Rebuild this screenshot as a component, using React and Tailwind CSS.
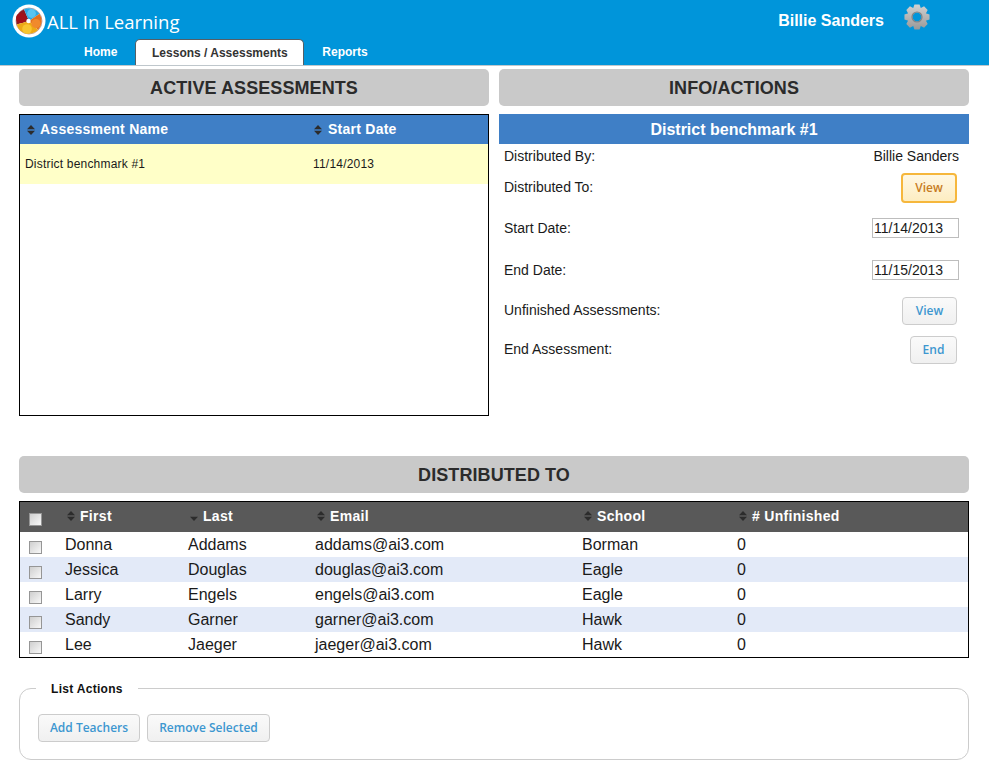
import React from 'react'

const people = [
  { first: 'Donna', last: 'Addams', email: 'addams@ai3.com', school: 'Borman', unfinished: 0 },
  { first: 'Jessica', last: 'Douglas', email: 'douglas@ai3.com', school: 'Eagle', unfinished: 0 },
  { first: 'Larry', last: 'Engels', email: 'engels@ai3.com', school: 'Eagle', unfinished: 0 },
  { first: 'Sandy', last: 'Garner', email: 'garner@ai3.com', school: 'Hawk', unfinished: 0 },
  { first: 'Lee', last: 'Jaeger', email: 'jaeger@ai3.com', school: 'Hawk', unfinished: 0 }
]

const Logo = () => (
  <svg width="34" height="34" viewBox="0 0 34 34" className="shrink-0">
    <circle cx="17" cy="17" r="16.500" fill="#fff" />
    <circle cx="17" cy="17" r="13" fill="#fff" stroke="#8a6a70" strokeWidth="0.6" />
    <path d="M17 17L4.600 20.500A12.800 12.800 0 0 1 12 5.200z" fill="#8e1a22" />
    <path d="M17 17L12 5.200a12.800 12.800 0 0 1 15.500 4.500z" fill="#2aa8e4" />
    <path d="M17 17l10.500-7.300a12.800 12.800 0 0 1-1.500 16.300z" fill="#e2701e" />
    <path d="M17 17l9 9a12.800 12.800 0 0 1-21.400-5.500z" fill="#eda915" />
    <circle cx="9" cy="14" r="5" fill="#a3121a" />
    <circle cx="19.500" cy="9.500" r="4.400" fill="#58c4f2" />
    <circle cx="24" cy="19.500" r="4.600" fill="#f08a2c" />
    <circle cx="15" cy="25" r="4.800" fill="#f8c630" />
    <circle cx="16.500" cy="17" r="2.200" fill="#fff" />
  </svg>
)

// eight toothed gear, outline worked out from the tooth angles
const gearPath = () => {
  const pts = []
  for (let i = 0; i < 8; i++) {
    const a = (i * Math.PI) / 4
    const spread = [[-0.42, 9.500], [-0.2, 12.800], [0.2, 12.800], [0.42, 9.500]]
    spread.forEach(([d, r]) => {
      pts.push(`${(13 + r * Math.sin(a + d)).toFixed(2)} ${(13 - r * Math.cos(a + d)).toFixed(2)}`)
    })
  }
  return `M${pts.join('L')}zM13 8.500a4.500 4.500 0 1 0 0 9a4.500 4.500 0 1 0 0-9z`
}

const Gear = () => (
  <svg width="26" height="26" viewBox="0 0 26 26" className="shrink-0">
    <defs>
      <linearGradient id="gearFill" x1="0" y1="0" x2="0" y2="1">
        <stop offset="0" stopColor="#d2d2d2" />
        <stop offset="0.55" stopColor="#b2b2b2" />
        <stop offset="1" stopColor="#989898" />
      </linearGradient>
    </defs>
    <path fillRule="evenodd" fill="url(#gearFill)" d={gearPath()} />
    <circle cx="13" cy="13" r="5" fill="none" stroke="#7f8588" strokeWidth="1.200" />
  </svg>
)

const SortIcon = ({ up = true, className = '' }) => (
  <svg width="8" height="10" viewBox="0 0 8 10" className={`shrink-0 ${className}`}>
    {up && <path d="M4 0l4 4.200H0z" fill="#2c2c2c" />}
    <path d="M4 10L0 5.800h8z" fill="#2c2c2c" />
  </svg>
)

const SectionTitle = ({ children }) => (
  <h2 className="flex h-[37px] items-center justify-center rounded-[5px] bg-[#c9c9c9] pt-[2px] text-[18px] font-bold tracking-[0.08px] text-[#2b2b2b]">
    {children}
  </h2>
)

const Button = ({ children, active, className = '' }) => (
  <button
    className={`flex items-center justify-center rounded-[4px] border font-['Open_Sans',sans-serif] text-[12px] font-semibold ${
      active
        ? 'border-[#f6b73c] bg-gradient-to-b from-[#fff8e4] to-[#fdedc1] text-[#c77c1f]'
        : 'border-[#cccccc] bg-gradient-to-b from-[#fafafa] to-[#f0f0f0] text-[#3d97d0]'
    } ${className}`}
  >
    {children}
  </button>
)

const Checkbox = () => (
  <input
    type="checkbox"
    className="block h-[13px] w-[13px] appearance-none border border-[#969696] bg-gradient-to-br from-[#cfcfcf] to-[#f8f8f8]"
  />
)

const InfoRow = ({ label, className = '', children }) => (
  <div className={`flex items-center justify-between pl-[5px] pr-[10px] ${className}`}>
    <span className="text-[14px] text-[#1a1a1a]">{label}</span>
    {children}
  </div>
)

const DateField = ({ value }) => (
  <input
    readOnly
    value={value}
    className="h-[20px] w-[87px] border border-[#bdbdbd] bg-white pl-[1px] text-[14px] text-[#1a1a1a] outline-none"
  />
)

export default function App() {
  return (
    <div className="min-h-[776px] bg-white font-['Liberation_Sans',Arial,sans-serif]">
      {/* header */}
      <header className="h-[66px] border-b border-[#bfc7cc] bg-[#0095da]">
        <div className="flex h-[39px] items-start justify-between pl-[12px]">
          <div className="flex items-center pt-[4px]">
            <Logo />
            <span className="ml-[1px] mt-[2px] font-['Open_Sans',sans-serif] text-[18.500px] font-medium text-white">ALL In Learning</span>
          </div>
          <div className="mr-[59px] flex items-start">
            <span className="mt-[9px] text-[16px] font-bold text-white">Billie Sanders</span>
            <span className="ml-[20px] mt-[4px]"><Gear /></span>
          </div>
        </div>
        <nav className="flex h-[26px] items-end pl-[84px] text-[12px] font-bold">
          <a className="mb-[4px] text-white">Home</a>
          <a className="ml-[18px] flex h-[26px] w-[169px] items-center justify-center rounded-t-[5px] border border-b-0 border-[#555f66] bg-white text-[#333]">
            Lessons / Assessments
          </a>
          <a className="mb-[4px] ml-[18px] text-white">Reports</a>
        </nav>
      </header>

      <main className="px-[19px] pt-[3px] pr-[20px]">
        <div className="grid grid-cols-[470px_470px] gap-x-[10px]">
          {/* active assessments */}
          <section>
            <SectionTitle>ACTIVE ASSESSMENTS</SectionTitle>
            <div className="mt-[8px] h-[302px] border border-black">
              <div className="flex h-[29px] items-center bg-[#3f7fc6] text-[14px] font-bold tracking-[0.25px] text-white">
                <div className="flex w-[294px] items-center pl-[7px]">
                  <SortIcon />
                  <span className="ml-[5px]">Assessment Name</span>
                </div>
                <div className="flex items-center">
                  <SortIcon />
                  <span className="ml-[6px]">Start Date</span>
                </div>
              </div>
              <div className="flex h-[40px] items-center bg-[#ffffc8] text-[12px] tracking-[0.2px] text-[#1a1a1a]">
                <div className="w-[293px] pl-[5px]">District benchmark #1</div>
                <div>11/14/2013</div>
              </div>
            </div>
          </section>

          {/* info and actions */}
          <section>
            <SectionTitle>INFO/ACTIONS</SectionTitle>
            <div className="mt-[8px] flex h-[30px] items-center justify-center bg-[#3f7fc6] pt-[2px] text-[16px] font-bold text-white">
              District benchmark #1
            </div>
            <InfoRow label="Distributed By:" className="mt-[4px] h-[17px]">
              <span className="text-[14px] text-[#1a1a1a]">Billie Sanders</span>
            </InfoRow>
            <InfoRow label="Distributed To:" className="mt-[7px] h-[30px] !pr-[12px]">
              <Button active className="mt-[2px] h-[30px] w-[56px] border-2">View</Button>
            </InfoRow>
            <InfoRow label="Start Date:" className="mt-[16px] h-[20px]">
              <DateField value="11/14/2013" />
            </InfoRow>
            <InfoRow label="End Date:" className="mt-[22px] h-[20px]">
              <DateField value="11/15/2013" />
            </InfoRow>
            <InfoRow label="Unfinished Assessments:" className="mt-[16px] h-[28px] !pr-[12px]">
              <Button className="mt-[2px] h-[28px] w-[55px]">View</Button>
            </InfoRow>
            <InfoRow label="End Assessment:" className="mt-[11px] h-[28px] !pr-[12px]">
              <Button className="mt-[2px] h-[28px] w-[47px]">End</Button>
            </InfoRow>
          </section>
        </div>

        {/* distributed to */}
        <section className="mt-[40px]">
          <SectionTitle>DISTRIBUTED TO</SectionTitle>
          <div className="mt-[8px] border border-black">
            <div className="grid h-[30px] grid-cols-[45px_123px_127px_267px_155px_1fr] bg-[#595959] text-[14px] font-bold tracking-[0.3px] text-white">
              <div className="pl-[9px] pt-[11px]"><Checkbox /></div>
              {['First', 'Last', 'Email', 'School', '# Unfinished'].map(name => (
                <div key={name} className="flex items-center pb-[2px] pl-[2px]">
                  <SortIcon up={name !== 'Last'} />
                  <span className="ml-[5px]">{name}</span>
                </div>
              ))}
            </div>
            {people.map((person, i) => (
              <div
                key={person.email}
                className={`grid h-[25px] grid-cols-[45px_123px_127px_267px_155px_1fr] items-center text-[16px] text-[#1a1a1a] ${
                  i % 2 === 1 ? 'bg-[#e3eaf8]' : 'bg-white'
                }`}
              >
                <div className="pl-[9px] pt-[5px]"><Checkbox /></div>
                <div>{person.first}</div>
                <div>{person.last}</div>
                <div>{person.email}</div>
                <div>{person.school}</div>
                <div>{person.unfinished}</div>
              </div>
            ))}
          </div>
        </section>

        {/* list actions */}
        <fieldset className="mt-[20px] h-[82px] rounded-[12px] border border-[#cccccc] pl-[18px]">
          <legend className="-ml-[2px] px-[15px] pt-[2px] text-[12px] font-bold tracking-[0.3px] text-[#111]">List Actions</legend>
          <div className="mt-[16px] flex gap-[7px]">
            <Button className="h-[28px] w-[102px]">Add Teachers</Button>
            <Button className="h-[28px] w-[123px]">Remove Selected</Button>
          </div>
        </fieldset>
      </main>
    </div>
  )
}
